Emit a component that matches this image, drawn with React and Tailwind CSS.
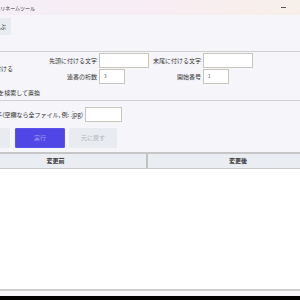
import React from "react";

export default function App() {
  return (
    <div className="w-[300px] h-[300px] overflow-hidden bg-black font-['Noto_Sans_CJK_JP','Noto_Sans',sans-serif] text-[#333] leading-none">
      <div className="h-[296px] flex flex-col bg-[#f5f5fa]">
        {/* title bar */}
        <div className="h-[15px] shrink-0 flex items-center justify-between bg-gradient-to-r from-[#f5eef7] via-[#f8edf4] to-[#f7efe8] pr-[14px]">
          <div className="w-[35px] min-w-0 shrink-0 flex justify-end">
            <span className="whitespace-nowrap shrink-0 text-[5px]">一括リネームツール</span>
          </div>
          <span className="block w-[5px] h-[1px] bg-[#555]" />
        </div>
        {/* toolbar */}
        <div className="h-[36px] shrink-0 pt-[3px]">
          <div className="w-[11px] h-[17px] flex items-center justify-end pr-[5px] bg-[#e8ebf0] rounded-r-[1px]">
            <span className="whitespace-nowrap shrink-0 text-[6px]">フォルダを選ぶ</span>
          </div>
        </div>
        <div className="h-[1px] shrink-0 bg-[#cfcfcf]" />
        {/* options */}
        <div className="h-[48px] shrink-0 flex">
          <div className="w-[45px] min-w-0 shrink-0 flex flex-col pt-[14px]">
            <div className="w-[13px] flex justify-end">
              <span className="whitespace-nowrap shrink-0 text-[6px]">連番を付ける</span>
            </div>
            <div className="w-[40px] flex justify-end mt-[18px]">
              <span className="whitespace-nowrap shrink-0 text-[6px]">文字列を検索して置換</span>
            </div>
          </div>
          <div className="grid grid-cols-[54px_50px_54px_50px] grid-rows-[15px_15px] gap-y-[1px] pt-[1px] text-[6px]">
            <div className="flex items-center justify-end pr-[2px] whitespace-nowrap">先頭に付ける文字</div>
            <div className="bg-white border border-[#c8c6bd]" />
            <div className="flex items-center justify-end pr-[2px] whitespace-nowrap">末尾に付ける文字</div>
            <div className="bg-white border border-[#c8c6bd]" />
            <div className="flex items-center justify-end pr-[2px] whitespace-nowrap">連番の桁数</div>
            <div className="w-[26px] bg-white border border-[#c8c6bd] flex items-center pl-[4px] text-[4.5px]">3</div>
            <div className="flex items-center justify-end pr-[2px] whitespace-nowrap">開始番号</div>
            <div className="w-[26px] bg-white border border-[#c8c6bd] flex items-center pl-[4px] text-[4.5px]">1</div>
          </div>
        </div>
        <div className="h-[1px] shrink-0 bg-[#cfcfcf]" />
        {/* filter */}
        <div className="shrink-0 pt-[6px] flex items-center gap-[2px] h-[21px]">
          <div className="w-[83px] min-w-0 shrink-0 flex justify-end">
            <span className="whitespace-nowrap shrink-0 text-[6px]">拡張子(空欄なら全ファイル, 例: .jpg)</span>
          </div>
          <div className="w-[37px] h-[15px] shrink-0 bg-white border border-[#c8c6bd]" />
        </div>
        {/* buttons */}
        <div className="shrink-0 mt-[6px] h-[20px] flex">
          <div className="w-[10px] h-[20px] bg-[#e8ebf0] rounded-r-[1px]" />
          <div className="ml-[5px] w-[50px] h-[20px] bg-[#5046e6] border border-[#5a52ea] flex items-center justify-center text-[6px] text-[#a39df3] rounded-[1px]">実行</div>
          <div className="ml-[4px] w-[48px] h-[20px] bg-[#e8ebf0] flex items-center justify-center text-[6px] text-[#b3b4bc] rounded-[1px]">元に戻す</div>
        </div>
        {/* table */}
        <div className="mt-[4px] flex-1 flex flex-col ml-[-35px] w-[363px]">
          <div className="h-[2px] shrink-0 bg-[#c6c6c6]" />
          <div className="h-[14px] shrink-0 flex bg-[#eaedf2] text-[6px] font-bold">
            <div className="w-[181px] shrink-0 flex items-center justify-center">変更前</div>
            <div className="w-[2px] shrink-0 bg-[#c2c2c2]" />
            <div className="w-[180px] shrink-0 flex items-center justify-center">変更後</div>
          </div>
          <div className="h-[1px] shrink-0 bg-[#cacaca]" />
          <div className="flex-1 bg-white" />
          <div className="h-[2px] shrink-0 bg-[#cfcfcf]" />
          <div className="h-[5px] shrink-0 bg-[#f5f5fa]" />
        </div>
      </div>
    </div>
  );
}
